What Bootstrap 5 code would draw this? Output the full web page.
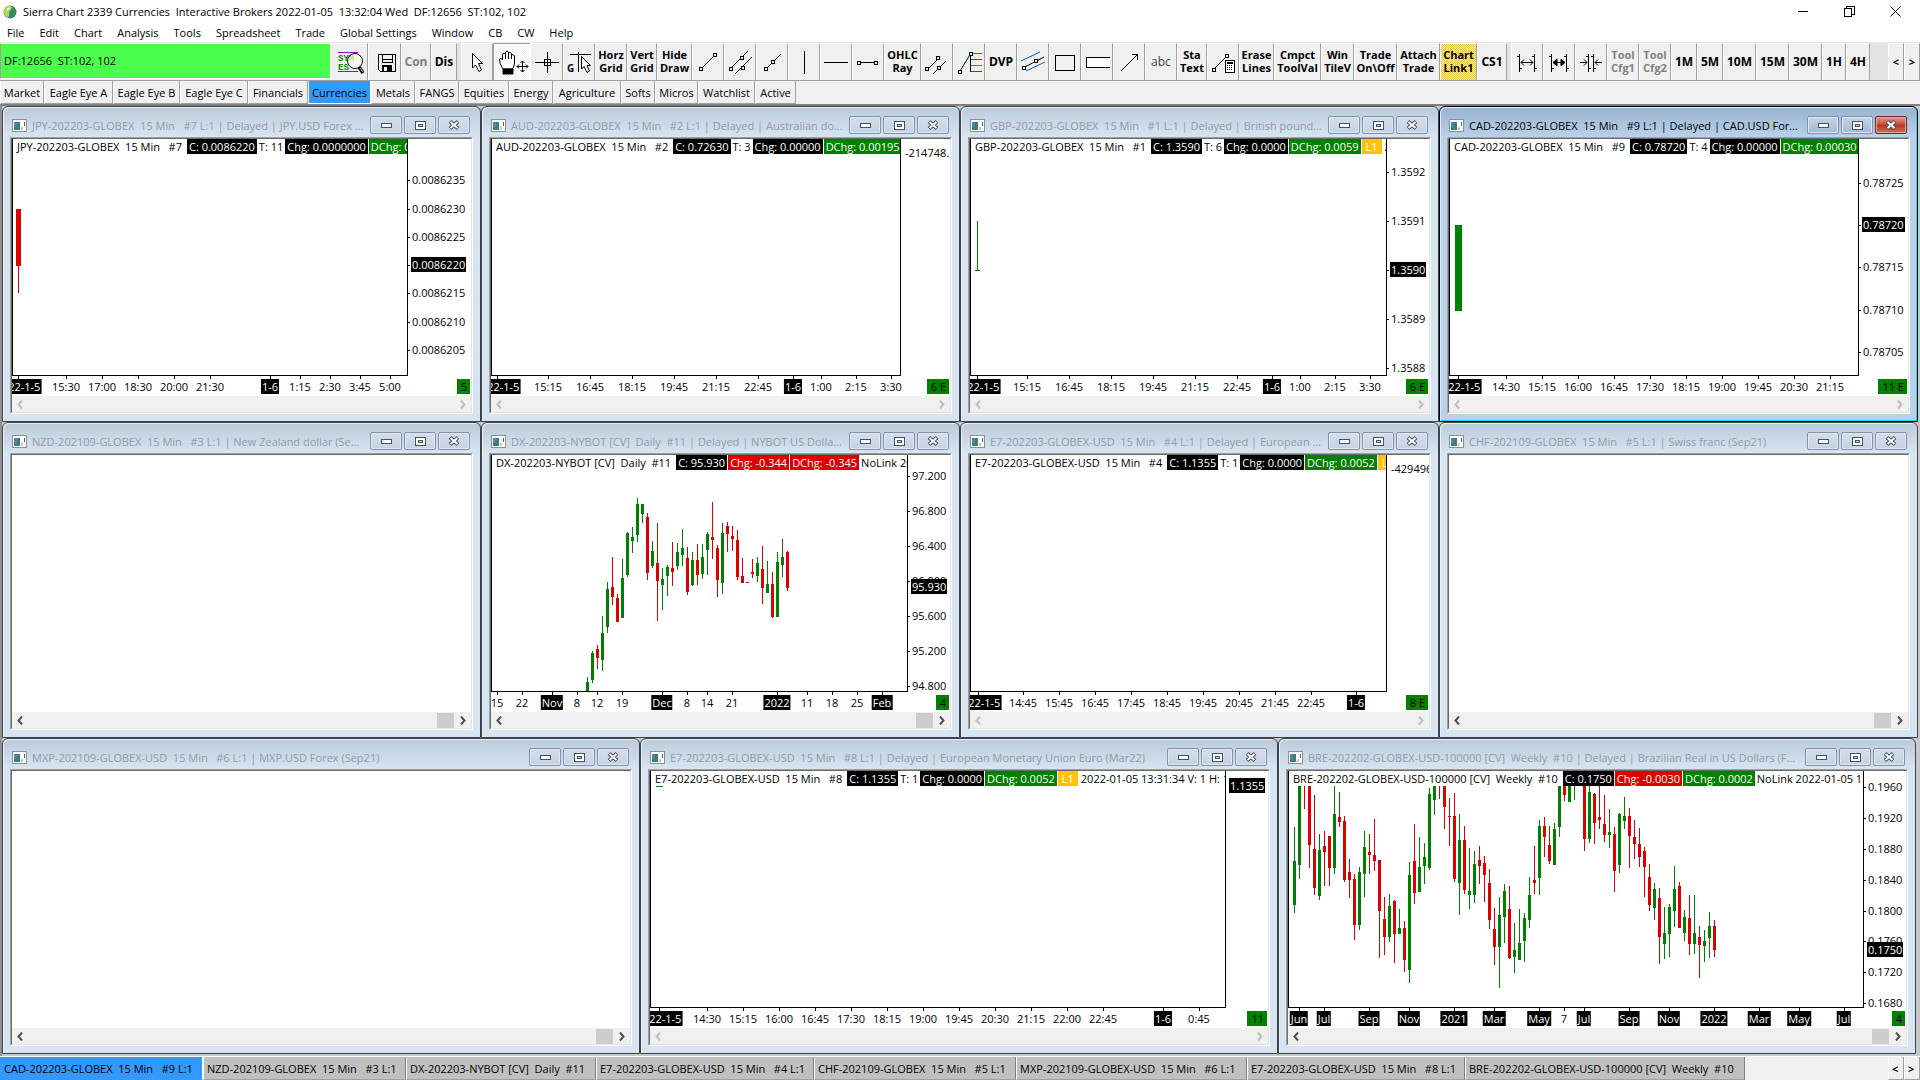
<!DOCTYPE html>
<html lang="en">
<head>
<meta charset="utf-8">
<meta name="viewport" content="width=device-width, initial-scale=1">
<title>Sierra Chart 2339 Currencies</title>
<link href="https://cdn.jsdelivr.net/npm/bootstrap@5.3.0/dist/css/bootstrap.min.css" rel="stylesheet">
<style>
  body { font-family: "Open Sans", "Noto Sans", sans-serif; font-size: 11px; line-height: 15px; color: #000; background: #fff; }
  button { font: inherit; color: inherit; background: none; border: 0; padding: 0; }
  a { color: inherit; text-decoration: none; }
  svg { display: block; flex: none; }
  .keep { white-space: pre; }

  .app-title { height: 23px; padding: 0 2px 0 3px; }
  .app-name { padding-left: 6px; }
  .app-ctl { width: 46px; height: 22px; display: flex; align-items: center; justify-content: center; }
  .menu-bar { height: 19px; padding-left: 7px; gap: 15px; }
  .menu-bar a { line-height: 20px; }

  .tools { background: #f0f0f0; border-top: 1px solid #e8e8e8; }
  .tool-row { height: 38px; border-bottom: 1px solid #a0a0a0; }
  .conn { width: 331px; height: 36px; border: 1px solid #fff; border-left-color: #a0a0a0; background: #4dff4d; display: flex; align-items: center; padding: 0 0 2px 3px; }
  .tbtn { flex: none; width: 32px; height: 37px; border-left: 1px solid #fff; border-top: 1px solid #fff; border-right: 1px solid #a0a0a0; padding-bottom: 2px; font-weight: 700; line-height: 13px; text-align: center; display: flex; align-items: center; justify-content: center; white-space: nowrap; overflow: hidden; }
  .tbtn.w16 { width: 16px; } .tbtn.w24 { width: 24px; } .tbtn.w26 { width: 26px; } .tbtn.w30 { width: 30px; }
  .tbtn.w33 { width: 33px; } .tbtn.w35 { width: 35px; } .tbtn.w37 { width: 37px; } .tbtn.w43 { width: 43px; } .tbtn.w47 { width: 47px; }
  .tbtn.big { font-size: 12px; }
  .tbtn.dim { color: #808080; }
  .tbtn.plain { font-weight: 400; color: #444; }
  .tbtn.down { border-color: #a0a0a0 #fff #fff #a0a0a0; background: conic-gradient(#fff 25%, #f0f0f0 0 50%, #fff 0 75%, #f0f0f0 0) 0 0/2px 2px; }
  .tbtn.linked { background: conic-gradient(#ffc800 25%, #fff0b8 0 50%, #ffc800 0 75%, #fff0b8 0) 0 0/2px 2px; }
  .tgap { width: 4px; background: #e3e3e3; }
  .ic { fill: none; stroke: #000; stroke-width: 1; }
  .ic .sq { fill: #f0f0f0; }
  .crisp { shape-rendering: crispEdges; }

  .tab-row { height: 23px; background: #f0f0f0; }
  .ttab { flex: none; border-left: 1px solid #fff; border-right: 1px solid #a0a0a0; border-bottom: 1px solid #a0a0a0; text-align: center; white-space: pre; overflow: hidden; }
  .ttab.on { background: #3399ff; border-color: #fff; }
  .chart-tabs { height: 24px; border-top: 1px solid #fff; background: #f0f0f0; }
  .chart-tabs .ttab { background: #c0c0c0; border-right-color: #808080; text-align: left; padding-left: 3px; }
  .chart-tabs .ttab.on { background: #3399ff; border-color: #3399ff #fff #3399ff #3399ff; }
  .chart-tabs .ttab.arrow { background: #f0f0f0; width: 16px; border-right-color: #a0a0a0; font-weight: 700; }

  .desk { background: #c8c8c8; border-top: 2px solid #808080; border-left: 2px solid #909090; padding: 0 2px 2px 0; min-height: 0; }
  .desk-row { display: grid; grid-auto-flow: column; grid-auto-columns: minmax(0, 1fr); flex: 1 1 0; min-height: 0; }
  .desk-row:last-child { padding-right: 2px; }
  .win { border: 1px solid #404449; border-radius: 6px 6px 0 0; background: linear-gradient(#bccbda 0, #d7e4f2 30px, #d7e4f2 100%); padding: 0 7px 7px; box-shadow: inset 1px 1px #e9f0f8; min-width: 0; min-height: 0; }
  .win-bar { height: 30px; flex: none; padding: 6px 3px 0 2px; color: #949ba4; }
  .win-name { padding-left: 5px; margin-right: 6px; overflow: hidden; text-overflow: ellipsis; white-space: pre; }
  .win-ctl { flex: none; gap: 2px; }
  .wbtn { flex: none; width: 32px; height: 18px; border: 1px solid #8391ab; border-radius: 2px; background: linear-gradient(#d3deea, #c5d3e3); box-shadow: inset 0 0 0 1px #dfe8f2; display: flex; align-items: center; justify-content: center; }
  .win.front { border-color: #000; background: linear-gradient(#98b3d0 0, #b9d1ea 30px, #b9d1ea 100%); box-shadow: inset 1px 1px #e0ebf7, inset -1px -1px #22d3ee; }
  .front .win-bar { color: #000; }
  .front .wbtn { background: linear-gradient(#c3d5e8, #9fb9d5); }
  .front .wbtn:last-child { background: linear-gradient(#e09a8c, #c75043 45%, #b8321c 50%, #d2705a); border-color: #6b2a26; box-shadow: inset 0 0 0 1px #e6a79d; }
  .client { border: 1px solid; border-color: #a0a0a0 #fff #fff #a0a0a0; flex: 1 1 0; min-height: 0; }
  .client-in { border: 1px solid; border-color: #696969 #e3e3e3 #e3e3e3 #696969; background: #fff; height: 100%; }

  .plot { border: 1px solid #000; border-top: 0; overflow: hidden; min-width: 0; }
  .info { top: 0; left: 3px; white-space: pre; line-height: 15px; }
  .info span { padding: 0 1px; margin-right: 1px; display: inline-block; }
  .info .ink, .info .up, .info .dn { padding: 0 2px; }
  .info .inst { background: #fff; padding-right: 3px; margin-right: 2px; }
  .info .src { padding: 0 4px; margin-right: 2px; }
  .ink { background: #000; color: #fff; }
  .up { background: #008000; color: #fff; }
  .dn { background: #dc0000; color: #fff; }
  .src { background: #ffc20e; color: #fff; }
  .yaxis { flex: none; width: 42px; overflow: hidden; margin-bottom: 1px; }
  .yaxis.mid { width: 49px; } .yaxis.wide { width: 63px; }
  .ytick { left: 0; width: 2px; height: 1px; background: #000; }
  .ylab { left: 3px; padding: 0 1px; margin-top: -8px; white-space: nowrap; }
  .xaxis { height: 20px; flex: none; overflow: hidden; }
  .xtick { top: 0; width: 1px; height: 3px; background: #000; }
  .xlab { top: 3px; padding: 0 1px; transform: translateX(-50%); white-space: nowrap; }
  .count { right: 1px; top: 3px; padding: 0 3px 0 4px; background: #008000; color: #000; white-space: pre; }
  .sbar { height: 16px; flex: none; background: #f0f0f0; }
  .sbar button { width: 16px; height: 16px; display: flex; align-items: center; justify-content: center; }
  .thumb { width: 17px; height: 15px; margin-right: 1px; background: #cdcdcd; }
</style>
</head>
<body class="vh-100 d-flex flex-column overflow-hidden">

<header class="app-title d-flex align-items-center">
  <svg width="14" height="14" viewBox="0 0 14 14"><circle cx="7" cy="7" r="6.5" fill="#2e7d9a"/><path d="M2 3Q6-1 9 2Q8 6 6 7Q7 10 5 13Q0 10 1 5Z" fill="#b6d84c"/><path d="M9 1Q14 5 13 9Q11 13 8 13Q10 9 9 6Z" fill="#3f8f3a"/><path d="M4 3Q6 2 7 3Q6 5 4 6Z" fill="#f3f7c4"/></svg>
  <span class="app-name keep flex-grow-1">Sierra Chart 2339 Currencies  Interactive Brokers 2022-01-05  13:32:04 Wed  DF:12656  ST:102, 102</span>
  <button class="app-ctl" aria-label="Minimize"><svg width="11" height="11" class="ic crisp"><path d="M0 5.5H10"/></svg></button>
  <button class="app-ctl" aria-label="Restore"><svg width="11" height="11" class="ic crisp"><path d="M.5 2.5h7v8h-7zM2.500 2V.5h8v8H8"/></svg></button>
  <button class="app-ctl" aria-label="Close"><svg width="11" height="11" class="ic"><path d="M.5.5l10 10M10.500.5l-10 10"/></svg></button>
</header>

<nav class="menu-bar d-flex" aria-label="Menu">
  <a href="#">File</a><a href="#">Edit</a><a href="#">Chart</a><a href="#">Analysis</a><a href="#">Tools</a><a href="#">Spreadsheet</a><a href="#">Trade</a><a href="#">Global Settings</a><a href="#">Window</a><a href="#">CB</a><a href="#">CW</a><a href="#">Help</a>
</nav>

<div class="tools">
  <div class="tool-row d-flex">
    <div class="conn keep">DF:12656  ST:102, 102</div>
    <button class="tbtn w37" aria-label="Find symbol"><svg width="36" height="36" viewBox="0 0 36 36"><path d="M6 9.500H26M6 28.500H26" stroke="#9a00c8"/><g font-family="Liberation Mono" font-weight="700" font-size="9" fill="#008a00"><text x="6" y="18">SYM</text><text x="6" y="27">ES</text></g><circle cx="23" cy="18" r="7.500" fill="#fffbe8" fill-opacity=".7" stroke="#111"/><path d="M27 24L31 30" stroke="#111" stroke-width="3.500"/><path d="M28 25L31 29" stroke="#bbb"/></svg></button>
    <button class="tbtn w33" aria-label="Save"><svg width="32" height="36" viewBox="0 0 32 36" class="ic crisp"><path d="M9.500 11.500H26.500V28.500H11.500L9.500 26.500ZM13.500 12V19.500H23.500V12M13 16.500H23"/><path d="M13.500 22.500h9v6h-9z" fill="#000"/><path d="M15 24h3v4h-3z" fill="#fff" stroke="none"/></svg></button>
    <button class="tbtn w30 big dim">Con</button>
    <button class="tbtn w26 big">Dis</button>
    <span class="tgap"></span>
    <button class="tbtn" aria-label="Pointer"><svg width="32" height="36" viewBox="0 0 32 36" class="ic"><path d="M11.500 10.500V25L14.500 22L18 28.500L20.500 27L17.500 20.500H21.500Z" fill="#fff"/></svg></button>
    <button class="tbtn w37 down" aria-label="Hand"><svg width="36" height="36" viewBox="0 0 36 36" class="ic"><path d="M9 26Q5 20 5.500 16Q7 14 8.500 17V11Q10 9 11.500 11V9Q13 7 14.500 9V10Q16 8.500 17.500 10.500V12Q19.500 11 20.500 13V20Q20 24 18.500 26Z" fill="#fff"/><path d="M11.500 11V16M14.500 10V16M17.500 12V16"/><path d="M9 26h10v5H9z" fill="#000"/><path d="M28.500 18V29M23 23.500H34M26.500 20L28.500 18L30.500 20M26.500 27L28.500 29L30.500 27M25 21.500L23 23.500L25 25.500M32 21.500L34 23.500L32 25.500"/></svg></button>
    <button class="tbtn w33" aria-label="Crosshair"><svg width="32" height="36" viewBox="0 0 32 36" class="ic crisp"><path d="M4 19.500H28M16.500 9V30M13.500 16.500h6v6h-6z"/></svg></button>
    <button class="tbtn" aria-label="Global crosshair"><svg width="32" height="36" viewBox="0 0 32 36" class="ic"><path class="crisp" d="M7 11.500H28M15.500 9V29"/><path d="M18.500 13.500V26L21 23.500L24 29.500L26.500 28L24 22.500H27.500Z" fill="#fff"/><text x="4" y="29" font-size="10" font-weight="700" fill="#000" stroke="none">G</text></svg></button>
    <button class="tbtn">Horz<br>Grid</button>
    <button class="tbtn w30">Vert<br>Grid</button>
    <button class="tbtn w35">Hide<br>Draw</button>
    <button class="tbtn" aria-label="Line"><svg width="32" height="36" viewBox="0 0 32 36" class="ic"><path d="M9 26L23 12"/><path class="sq crisp" d="M7.500 24.500h3v3h-3zM21.500 10.500h3v3h-3z"/></svg></button>
    <button class="tbtn" aria-label="Parallel lines"><svg width="32" height="36" viewBox="0 0 32 36" class="ic"><path d="M6 26L24 8M11 31L28 14"/><path class="sq crisp" d="M5.500 24.500h3v3h-3zM16.500 13.500h3v3h-3zM17.500 23.500h3v3h-3z"/></svg></button>
    <button class="tbtn" aria-label="Extending line"><svg width="32" height="36" viewBox="0 0 32 36" class="ic"><path d="M10 26L25 11"/><path class="sq crisp" d="M8.500 24.500h3v3h-3zM15.500 17.500h3v3h-3z"/></svg></button>
    <button class="tbtn" aria-label="Vertical line"><svg width="32" height="36" viewBox="0 0 32 36" class="ic crisp"><path d="M16.500 8V31"/></svg></button>
    <button class="tbtn" aria-label="Horizontal line"><svg width="32" height="36" viewBox="0 0 32 36" class="ic crisp"><path d="M4 19.500H28"/></svg></button>
    <button class="tbtn" aria-label="Horizontal ray"><svg width="32" height="36" viewBox="0 0 32 36" class="ic crisp"><path d="M7 19.500H25"/><path class="sq" d="M5.500 18.500h3v3h-3zM22.500 18.500h3v3h-3z"/></svg></button>
    <button class="tbtn w37">OHLC<br>Ray</button>
    <button class="tbtn" aria-label="Channel"><svg width="32" height="36" viewBox="0 0 32 36" class="ic"><path d="M7 26L18 15M12 31L25 18"/><path class="sq crisp" d="M4.500 24.500h3v3h-3zM15.500 13.500h3v3h-3zM16.500 23.500h3v3h-3z"/></svg></button>
    <button class="tbtn" aria-label="Retracement"><svg width="32" height="36" viewBox="0 0 32 36" class="ic"><path d="M7 28L18 10"/><g class="crisp"><path d="M17.500 10V29"/><path d="M18 10.500H29" stroke="#00a000"/><path d="M18 16.500H29" stroke="#0060d0"/><path d="M18 22.500H29" stroke="#e05000"/><path d="M18 28.500H29" stroke="#9a00c8"/><path class="sq" d="M5.500 27.500h3v3h-3zM16.500 9.500h3v3h-3z"/></g></svg></button>
    <button class="tbtn big">DVP</button>
    <button class="tbtn" aria-label="Regression channel"><svg width="32" height="36" viewBox="0 0 32 36" class="ic"><path d="M4 18L23 9M9 28L28 19" stroke="#0060d0"/><path d="M6 25L27 14"/><path class="sq crisp" d="M5.500 23.500h3v3h-3zM17.500 16.500h3v3h-3z"/></svg></button>
    <button class="tbtn" aria-label="Rectangle"><svg width="32" height="36" viewBox="0 0 32 36" class="ic crisp"><path d="M6.500 12.500h19v15h-19z"/></svg></button>
    <button class="tbtn" aria-label="Extending rectangle"><svg width="32" height="36" viewBox="0 0 32 36" class="ic crisp"><path d="M29 14.500H5.500V24.500H29" fill="#fff"/></svg></button>
    <button class="tbtn" aria-label="Arrow"><svg width="32" height="36" viewBox="0 0 32 36" class="ic"><path d="M8 28L25 11M19 11.500H24.500V17"/></svg></button>
    <button class="tbtn big plain">abc</button>
    <button class="tbtn w30">Sta<br>Text</button>
    <button class="tbtn" aria-label="Calculator"><svg width="32" height="36" viewBox="0 0 32 36" class="ic"><path d="M7 26L20 13"/><g class="crisp"><path class="sq" d="M5.500 25.500h3v3h-3zM18.500 11.500h3v3h-3z"/><path d="M18.500 17.500h9v12h-9z" fill="#fff"/><path d="M20 20h6" stroke-width="2"/><path d="M20 22.500h6M20 24.500h6M20 26.500h6" stroke-dasharray="1 1"/></g></svg></button>
    <button class="tbtn w35">Erase<br>Lines</button>
    <button class="tbtn w47">Cmpct<br>ToolVal</button>
    <button class="tbtn w33">Win<br>TileV</button>
    <button class="tbtn w43">Trade<br>On\Off</button>
    <button class="tbtn w43">Attach<br>Trade</button>
    <button class="tbtn w37 linked">Chart<br>Link1</button>
    <button class="tbtn w30 big">CS1</button>
    <span class="tgap"></span>
    <button class="tbtn" aria-label="Widen spacing"><svg width="32" height="36" viewBox="0 0 32 36" class="ic"><path class="crisp" d="M8.500 11V29M6 13.500H8M9 25.500H11M23.500 11V29M21 13.500H23M24 25.500H26"/><path d="M10 19.500H22M13 16.500L10 19.500L13 22.500M19 16.500L22 19.500L19 22.500"/></svg></button>
    <button class="tbtn" aria-label="Default spacing"><svg width="32" height="36" viewBox="0 0 32 36" class="ic"><path class="crisp" d="M8.500 11V29M6 13.500H8M9 25.500H11M23.500 11V29M21 13.500H23M24 25.500H26"/><path d="M10 19.500H22M14 16L10 19.500L14 23ZM18 16L22 19.500L18 23Z" fill="#000"/></svg></button>
    <button class="tbtn" aria-label="Narrow spacing"><svg width="32" height="36" viewBox="0 0 32 36" class="ic"><path class="crisp" d="M13.500 11V29M11 13.500H13M14 25.500H16M18.500 11V29M16 13.500H18M19 25.500H21"/><path d="M5 19.500H12M9 16.500L12 19.500L9 22.500M27 19.500H20M23 16.500L20 19.500L23 22.500"/></svg></button>
    <button class="tbtn dim">Tool<br>Cfg1</button>
    <button class="tbtn dim">Tool<br>Cfg2</button>
    <button class="tbtn w26 big">1M</button>
    <button class="tbtn w26 big">5M</button>
    <button class="tbtn w33 big">10M</button>
    <button class="tbtn w33 big">15M</button>
    <button class="tbtn w33 big">30M</button>
    <button class="tbtn w24 big">1H</button>
    <button class="tbtn w24 big">4H</button>
    <span class="tgap flex-grow-1"></span>
    <button class="tbtn w16">&lt;</button>
    <button class="tbtn w16">&gt;</button>
  </div>
  <nav class="tab-row d-flex" id="bookTabs" aria-label="Chartbooks"></nav>
</div>

<main class="desk flex-grow-1 d-flex flex-column" id="desk"></main>
<nav class="chart-tabs d-flex" id="chartTabs" aria-label="Charts"></nav>

<script src="https://cdn.jsdelivr.net/npm/bootstrap@5.3.0/dist/js/bootstrap.bundle.min.js"></script>
<script>
const books = [['Market',44],['Eagle Eye A',69],['Eagle Eye B',67],['Eagle Eye C',68],['Financials',60],['Currencies',63,1],['Metals',44],['FANGS',44],['Equities',50],['Energy',44],['Agriculture',68],['Softs',34],['Micros',43],['Watchlist',57],['Active',41]];
const charts = [['CAD-202203-GLOBEX  15 Min   #9 L:1',203,1],['NZD-202109-GLOBEX  15 Min   #3 L:1',203],['DX-202203-NYBOT [CV]  Daily  #11',190],['E7-202203-GLOBEX-USD  15 Min   #4 L:1',218],['CHF-202109-GLOBEX  15 Min   #5 L:1',202],['MXP-202109-GLOBEX-USD  15 Min   #6 L:1',231],['E7-202203-GLOBEX-USD  15 Min   #8 L:1',218],['BRE-202202-GLOBEX-USD-100000 [CV]  Weekly  #10',280]];
const tabs = list => list.map(([t, w, on]) => `<button class="ttab${on ? ' on' : ''}" style="width:${w}px">${t}</button>`).join('');
document.getElementById('bookTabs').innerHTML = tabs(books);
document.getElementById('chartTabs').innerHTML = tabs(charts) + '<button class="ttab arrow ms-auto">&lt;</button><button class="ttab arrow">&gt;</button>';

// Candle rows: colour, high, body top, body bottom, low, in thirds of a pixel; one row per bar, "-" for a bar out of range.
const dxBars = `g771,786,813,813 g693,698,780,789 r675,687,714,746 g588,639,720,753 g487,507,621,638 r411,501,531,554 r522,534,606,606 g417,474,594,594 g336,339,465,470 g321,351,363,399 g234,252,345,365 g252,252,282,308 r279,291,459,479 g363,393,438,443 r309,429,483,602 g445,477,495,570 g435,441,468,528 r366,444,456,497 g369,396,438,449 g327,384,405,437 r381,414,516,524 g396,420,495,497 r372,420,465,494 g372,411,462,476 g336,342,390,464 r246,351,360,417 r375,384,480,530 g309,339,489,521 r306,318,342,395 r318,348,357,392 r330,360,471,479 r414,468,489,489 r486,486,489,489 r417,456,462,473 g411,429,468,486 r378,447,504,551 g422,492,519,519 r456,492,591,593 g396,426,591,591 g357,411,435,470 r393,396,504,512`;
const breBars = `g291,393,525,548 g160,160,405,447 r160,160,160,237 r160,160,345,414 r195,357,474,494 g312,360,498,510 r303,348,366,467 r318,318,414,467 g160,252,414,432 r186,261,276,290 r258,273,450,456 r388,426,450,504 r432,447,585,629 g411,426,585,600 g303,351,432,500 r312,366,375,431 r267,375,393,422 r390,390,543,684 r501,567,621,675 g491,528,621,635 r510,513,612,699 g537,594,612,612 r573,594,690,726 g395,435,720,759 r282,393,489,521 g321,411,486,486 g339,381,408,461 g174,192,414,419 g160,160,210,255 r160,160,160,207 r160,160,231,296 r204,258,261,348 r189,258,447,456 g252,330,459,555 r288,330,480,491 g354,483,495,537 g363,402,495,518 r348,390,408,461 r378,399,435,516 r417,459,570,597 r534,597,651,705 g501,555,651,773 g462,483,561,639 r468,537,684,687 g579,660,681,729 g537,639,690,690 g549,564,633,696 g441,495,570,594 r348,450,459,492 g270,288,444,495 r261,288,321,381 r288,345,393,402 g279,297,405,405 g160,160,291,321 r160,160,195,213 g160,160,216,216 g160,160,160,210 - r160,160,327,363 g160,186,327,339 r189,192,279,342 r160,261,270,297 r195,282,315,336 g237,306,315,354 r291,312,423,486 g249,252,405,429 g201,258,273,297 r234,258,318,414 r270,321,342,387 r294,342,381,411 r351,363,411,501 r402,441,525,543 g459,477,534,569 r474,504,621,701 g531,609,642,687 g522,531,612,681 g408,477,543,591 r456,468,594,594 g540,561,609,633 r495,564,642,675 g495,609,642,672 r588,621,645,744 g600,633,648,696 g546,588,624,684 r570,588,660,681`;
const ink = { g: '#008000', r: '#dc0000' };
const bars = (text, x0, y0) => text.split(' ').map((row, i) => {
  if (row === '-') return '';
  const [h, t, b, l] = row.slice(1).split(',').map(v => Math.round((v - y0) / 3));
  const x = x0 + 5 * i, c = ink[row[0]];
  return `<path fill="${c}" d="M${x} ${h}h1V${l}h-1z"/>` + (b > t ? `<path fill="${c}" d="M${x - 1} ${t}h3V${b}h-3z"/>` : '');
}).join('');
const rect = (c, x, y, w, h) => `<path fill="${ink[c]}" d="M${x} ${y}h${w}v${h}h-${w}z"/>`;
const dated = (first, xs, labels, marks) => [['2022-1-5', first, 1], ...labels.split(' ').map((t, i) => [t, xs[i], marks.includes(t)])];
const steps = (from, step, n) => Array.from({ length: n }, (_, i) => from + step * i);
const auds = [57,99,141,183,225,267,302,330,365,400], audl = '15:15 16:45 18:15 19:45 21:15 22:45 1-6 1:00 2:15 3:30';

const rows = [[
  { name: 'JPY-202203-GLOBEX  15 Min   #7 L:1 | Delayed | JPY.USD Forex (Mar22)', info: 'JPY-202203-GLOBEX  15 Min   #7', chips: [['ink','C: 0.0086220'],['','T: 11'],['ink','Chg: 0.0000000'],['up','DChg: 0.0000015']],
    y: [['0.0086235',41],['0.0086230',70],['0.0086225',98],['0.0086220',126,1],['0.0086215',154],['0.0086210',183],['0.0086205',211]], yw: 'wide',
    x: dated(6, [54,90,126,162,198,258,288,318,348,378], '15:30 17:00 18:30 20:00 21:30 1-6 1:15 2:30 3:45 5:00', ['1-6']),
    art: rect('r',3,70,5,57) + rect('r',5,127,1,27), count: '5' },
  { name: 'AUD-202203-GLOBEX  15 Min   #2 L:1 | Delayed | Australian dollar (Mar22)', info: 'AUD-202203-GLOBEX  15 Min   #2', chips: [['ink','C: 0.72630'],['','T: 3'],['ink','Chg: 0.00000'],['up','DChg: 0.00195']],
    y: [['-214748.3648',14,0,1]], yw: 'mid', x: dated(6, auds, audl, ['1-6']), art: '', count: '6 E' },
  { name: 'GBP-202203-GLOBEX  15 Min   #1 L:1 | Delayed | British pound (Mar22)', info: 'GBP-202203-GLOBEX  15 Min   #1', chips: [['ink','C: 1.3590'],['','T: 6'],['ink','Chg: 0.0000'],['up','DChg: 0.0059'],['src','L1'],['','2022-01-05']],
    y: [['1.3592',33],['1.3591',82],['1.3590',131,1],['1.3589',180],['1.3588',229]], x: dated(7, auds, audl, ['1-6']), art: rect('g',6,82,1,50) + rect('g',4,131,5,1), count: '6 E' },
  { name: 'CAD-202203-GLOBEX  15 Min   #9 L:1 | Delayed | CAD.USD Forex (Mar22)', front: 1, info: 'CAD-202203-GLOBEX  15 Min   #9', chips: [['ink','C: 0.78720'],['','T: 4'],['ink','Chg: 0.00000'],['up','DChg: 0.00030']],
    y: [['0.78725',44],['0.78720',86,1],['0.78715',128],['0.78710',171],['0.78705',213]], yw: 'mid', x: dated(9, steps(57,36,10), '14:30 15:15 16:00 16:45 17:30 18:15 19:00 19:45 20:30 21:15', []), art: rect('g',5,86,7,86), count: '11 E' }
], [
  { name: 'NZD-202109-GLOBEX  15 Min   #3 L:1 | New Zealand dollar (Sep21)', live: 1 },
  { name: 'DX-202203-NYBOT [CV]  Daily  #11 | Delayed | NYBOT US Dollar Index (Mar22)', live: 1, info: 'DX-202203-NYBOT [CV]  Daily  #11', chips: [['ink','C: 95.930'],['dn','Chg: -0.344'],['dn','DChg: -0.345'],['','NoLink 2022']],
    y: [['97.200',21],['96.800',56],['96.400',91],['96.000',126],['95.600',161],['95.200',196],['94.800',231],['95.930',132,2]],
    x: [['15',6],['22',31],['Nov',61,1],['8',86],['12',106],['19',131],['Dec',171,1],['8',196],['14',216],['21',241],['2022',286,1],['11',316],['18',341],['25',366],['Feb',391,1]], art: bars(dxBars, 95, 105), count: '4' },
  { name: 'E7-202203-GLOBEX-USD  15 Min   #4 L:1 | Delayed | European Monetary Union Euro (Mar22)', info: 'E7-202203-GLOBEX-USD  15 Min   #4', chips: [['ink','C: 1.1355'],['','T: 1'],['ink','Chg: 0.0000'],['up','DChg: 0.0052'],['src','L1']],
    y: [['-429496.7296',14,0,1]], x: dated(8, [...steps(53,36,9),386], '14:45 15:45 16:45 17:45 18:45 19:45 20:45 21:45 22:45 1-6', ['1-6']), art: '', count: '8 E' },
  { name: 'CHF-202109-GLOBEX  15 Min   #5 L:1 | Swiss franc (Sep21)', live: 1 }
], [
  { name: 'MXP-202109-GLOBEX-USD  15 Min   #6 L:1 | MXP.USD Forex (Sep21)', live: 1 },
  { name: 'E7-202203-GLOBEX-USD  15 Min   #8 L:1 | Delayed | European Monetary Union Euro (Mar22)', info: 'E7-202203-GLOBEX-USD  15 Min   #8', chips: [['ink','C: 1.1355'],['','T: 1'],['ink','Chg: 0.0000'],['up','DChg: 0.0052'],['src','L1'],['','2022-01-05 13:31:34 V: 1 H: 1.1355']],
    y: [['1.1355',15,2]], x: dated(9, [...steps(57,36,12),513,549], '14:30 15:15 16:00 16:45 17:30 18:15 19:00 19:45 20:30 21:15 22:00 22:45 1-6 0:45', ['1-6']), art: rect('g',5,15,7,1), count: '11' },
  { name: 'BRE-202202-GLOBEX-USD-100000 [CV]  Weekly  #10 | Delayed | Brazilian Real in US Dollars (Feb22)', live: 1, info: 'BRE-202202-GLOBEX-USD-100000 [CV]  Weekly  #10', chips: [['ink','C: 0.1750'],['dn','Chg: -0.0030'],['up','DChg: 0.0002'],['','NoLink 2022-01-05 13:31']],
    y: [['0.1960',16],['0.1920',47],['0.1880',78],['0.1840',109],['0.1800',140],['0.1760',170],['0.1720',201],['0.1680',232],['0.1750',179,2]],
    x: [['Jun',11,1],['Jul',36,1],['Sep',81,1],['Nov',121,1],['2021',166,1],['Mar',206,1],['May',251,1],['7',276],['Jul',296,1],['Sep',341,1],['Nov',381,1],['2022',426,1],['Mar',471,1],['May',511,1],['Jul',556,1]], art: bars(breBars, 5, 123), count: '4' }
]];

const chevron = (d, live) => `<svg width="6" height="9" viewBox="0 0 6 9"><path d="${d}" fill="none" stroke="${live ? '#505050' : '#bfbfbf'}" stroke-width="2"/></svg>`;
// y tick flag: 1 = boxed on a tick, 2 = boxed last price without a tick; a fourth value hides the tick.
const body = c => !c.info ? '<div class="flex-grow-1"></div>' : `
  <div class="d-flex flex-grow-1">
    <div class="plot position-relative flex-grow-1">
      <svg class="crisp w-100 h-100" aria-hidden="true">${c.art}</svg>
      <div class="info position-absolute"><span class="inst">${c.info}</span>${c.chips.map(([k, t]) => `<span class="${k}">${t}</span>`).join('')}</div>
    </div>
    <div class="yaxis position-relative ${c.yw || ''}">${c.y.map(([t, y, k, bare]) => (k === 2 || bare ? '' : `<i class="ytick position-absolute" style="top:${y}px"></i>`) + `<span class="ylab position-absolute ${k ? 'ink' : ''}" style="top:${y}px">${t}</span>`).join('')}</div>
  </div>
  <div class="xaxis position-relative">${c.x.map(([t, x, k]) => `<i class="xtick position-absolute" style="left:${x}px"></i><span class="xlab position-absolute ${k ? 'ink' : ''}" style="left:${x}px">${t}</span>`).join('')}<span class="count position-absolute">${c.count}</span></div>`;
const glyph = '<svg class="crisp" width="15" height="13"><path d="M0 0h15v13H0z" fill="#8a9096"/><path d="M1 1h13v11H1z" fill="#fff"/><path d="M2 3h6v8H2z" fill="#3c7f74"/><path d="M2 3h3v5H2z" fill="#4a86b8"/><path d="M9 8h2v3H9z" fill="#c4c8cc"/><path d="M12 3h1v4h-1z" fill="#4a6a50"/></svg>';
const win = c => `
  <section class="win d-flex flex-column ${c.front ? 'front' : ''}" aria-label="${c.name}">
    <div class="win-bar d-flex align-items-center">
      ${glyph}<span class="win-name flex-grow-1">${c.name}</span>
      <div class="win-ctl d-flex">
        <button class="wbtn" aria-label="Minimize"><svg class="crisp" width="11" height="5"><path d="M.5.5h10v4H.5z" fill="#fff" stroke="#4a5060"/></svg></button>
        <button class="wbtn" aria-label="Maximize"><svg class="crisp" width="11" height="9"><path d="M.5.5h10v8H.5z" fill="#fff" stroke="#4a5060"/><path d="M3.500 3.500h4v2h-4z" fill="#c5d3e3" stroke="#4a5060"/></svg></button>
        <button class="wbtn" aria-label="Close"><svg width="12" height="10" viewBox="0 0 12 10"><path d="M2 1.500L10 8.500M10 1.500L2 8.500" stroke="#4a5060" stroke-width="4"/><path d="M2.500 2L9.500 8M9.500 2L2.500 8" stroke="#fff" stroke-width="2"/></svg></button>
      </div>
    </div>
    <div class="client"><div class="client-in d-flex flex-column">${body(c)}
      <div class="sbar d-flex align-items-center"><button aria-label="Scroll left">${chevron('M5 .5L1.500 4.500L5 8.500', c.live)}</button><span class="flex-grow-1"></span>${c.live ? '<span class="thumb"></span>' : ''}<button aria-label="Scroll right">${chevron('M1 .5L4.500 4.500L1 8.500', c.live)}</button></div>
    </div></div>
  </section>`;
document.getElementById('desk').innerHTML = rows.map(r => `<div class="desk-row">${r.map(win).join('')}</div>`).join('');
</script>
</body>
</html>
